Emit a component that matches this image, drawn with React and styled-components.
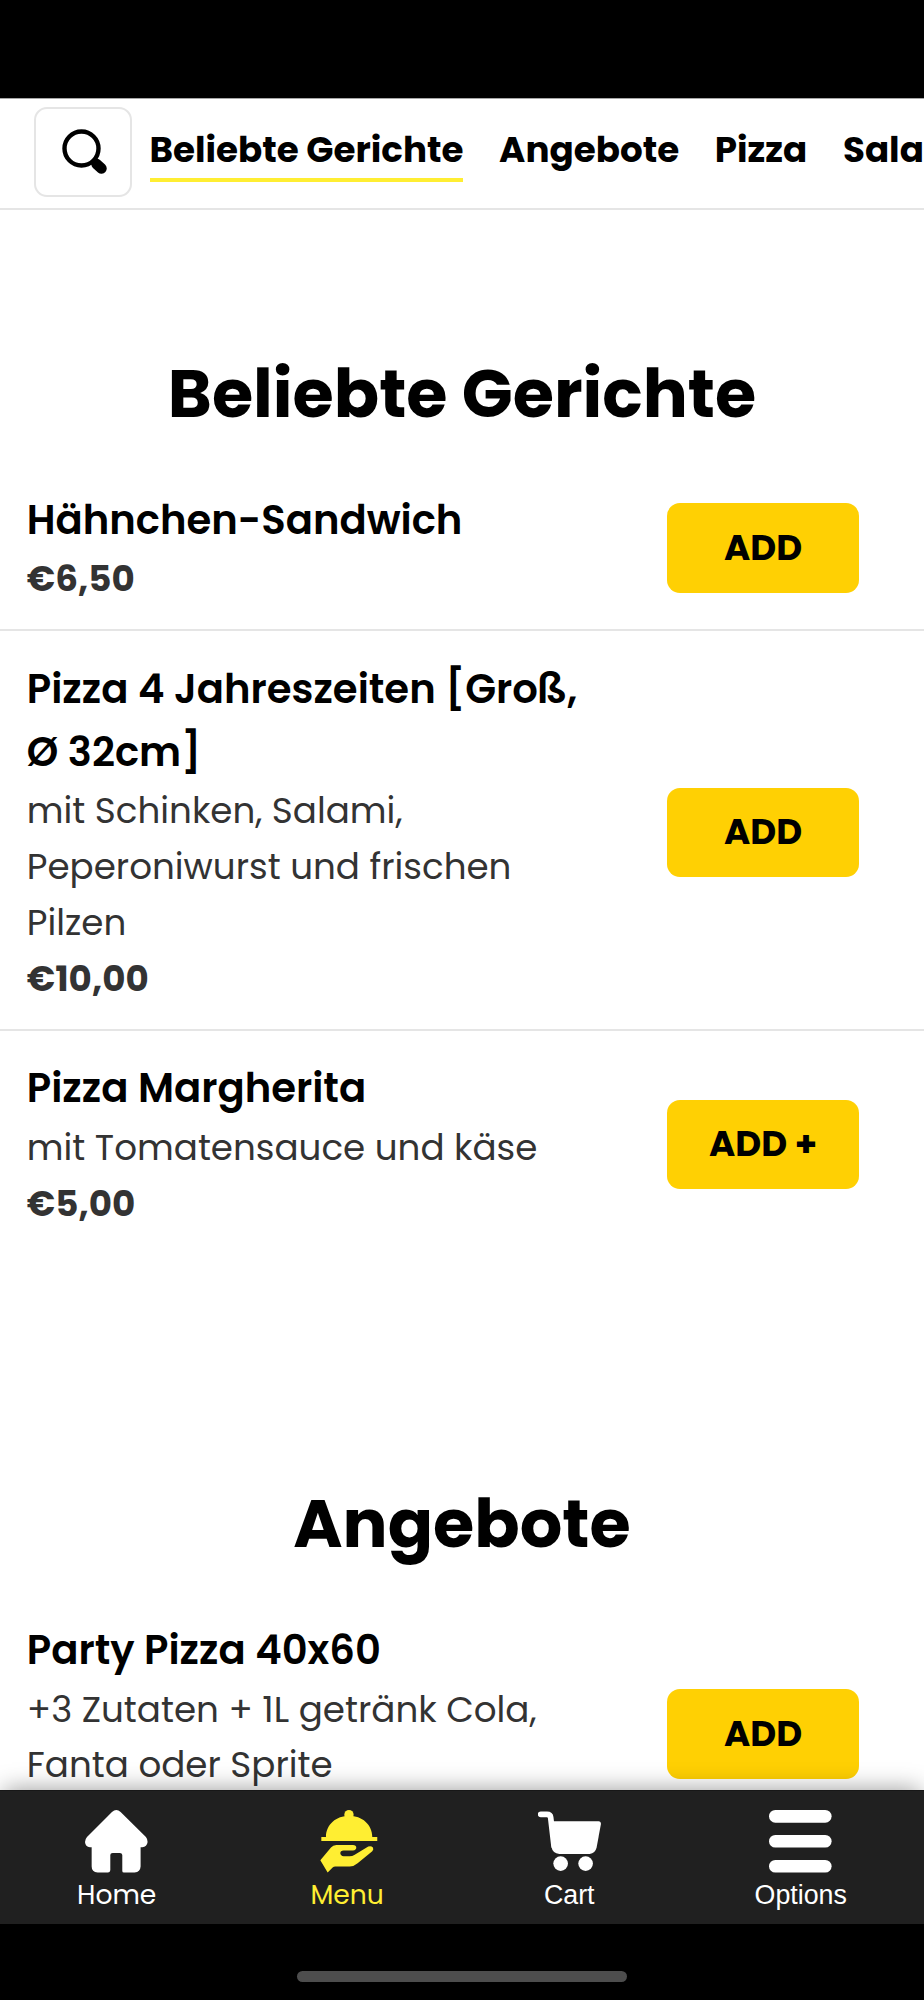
import React from "react";
import styled, { createGlobalStyle } from "styled-components";

const GlobalStyle = createGlobalStyle`
  *, *::before, *::after { box-sizing: border-box; }
  body { margin: 0; background: #000; }
  h2, h3, p { margin: 0; }
`;

const Screen = styled.div`
  display: flex;
  flex-direction: column;
  width: 924px;
  height: 2000px;
  overflow: hidden;
  background: #fff;
  color: #000;
  font-family: Poppins, Inter, sans-serif;
`;

const StatusBar = styled.div`
  flex: none;
  height: 98px;
  background: #000;
`;

const CategoryBar = styled.header`
  flex: none;
  display: flex;
  align-items: flex-start;
  gap: 18px;
  height: 112px;
  padding: 8px 0 0 33.5px;
  overflow: hidden;
  border-top: 1px solid #a6a6a6;
  border-bottom: 2.5px solid #e5e5e5;
`;

const SearchButton = styled.button`
  flex: none;
  display: flex;
  align-items: center;
  justify-content: center;
  width: 98px;
  height: 90px;
  padding: 0 0 0 5px;
  border: 2px solid #e5e5e5;
  border-radius: 13px;
  background: #fff;
`;

const CategoryList = styled.nav`
  display: flex;
  gap: 35.7px;
  padding-top: 16px;
`;

const Category = styled.a`
  flex: none;
  padding-bottom: 1px;
  border-bottom: 4px solid ${(p) => (p.$active ? "#ffee32" : "transparent")};
  font-size: 35.7px;
  font-weight: 700;
  line-height: 54px;
  white-space: nowrap;
`;

const MenuContent = styled.main`
  flex: 1;
  min-height: 0;
  overflow: hidden;
`;

const Section = styled.section`
  padding: 133.6px 0 86.7px;
`;

const SectionTitle = styled.h2`
  margin-bottom: 18.1px;
  font-size: 66.9px;
  font-weight: 700;
  line-height: 100.5px;
  text-align: center;
`;

const DishRow = styled.article`
  display: flex;
  align-items: center;
  justify-content: space-between;
  padding: 26.5px 65px 22px 26.8px;

  & + & {
    border-top: 2.2px solid #e5e5e5;
  }
`;

const DishInfo = styled.div`
  width: 570px;
`;

const DishName = styled.h3`
  font-size: 40.15px;
  font-weight: 600;
  line-height: 62.8px;
`;

const DishText = styled.p`
  color: #333;
  font-size: 35.7px;
  line-height: 55.8px;
`;

const Price = styled(DishText)`
  min-height: 55.8px;
  font-weight: 700;
`;

const AddButton = styled.button`
  flex: none;
  width: 192px;
  height: 89.3px;
  margin-top: 0.2px;
  padding: 0;
  border: 0;
  border-radius: 13px;
  background: #ffd003;
  color: #000;
  font: 700 35.7px/88.5px Poppins, Inter, sans-serif;
`;

const TabBar = styled.nav`
  flex: none;
  position: relative;
  display: flex;
  justify-content: space-around;
  height: 134px;
  padding-top: 19px;
  border-top: 1px solid #171717;
  background: #202020;
  box-shadow: 0 -5px 22px -4px rgba(0, 0, 0, 0.38);
`;

const Tab = styled.a`
  display: flex;
  flex-direction: column;
  align-items: center;
  color: ${(p) => (p.$active ? "#ffee32" : "#fff")};
  font-family: ${(p) => (p.$system ? '"Liberation Sans", Arial' : "Poppins, Inter")}, sans-serif;
  font-size: ${(p) => (p.$system ? "26.8px" : "26.6px")};
  line-height: ${(p) => (p.$system ? "44px" : "43px")};
`;

const TabIcon = styled.svg`
  width: 62.6px;
  height: 62.6px;
  fill: currentColor;
`;

const HomeArea = styled.footer`
  flex: none;
  display: flex;
  justify-content: center;
  height: 76px;
  padding-top: 47px;
  background: #000;
`;

const HomeIndicator = styled.div`
  width: 330px;
  height: 11px;
  border-radius: 6px;
  background: #4d4d4d;
`;

const SearchIcon = () => (
  <svg width="46" height="46" viewBox="0 0 46 46" fill="none" stroke="#000">
    <circle cx="19.5" cy="19.5" r="17" strokeWidth="4.4" />
    <path d="M30 31L34 35" strokeWidth="7" />
    <path d="M34.500 35L39.500 39.500" strokeWidth="10.500" strokeLinecap="round" />
  </svg>
);

const icons = {
  home: (
    <path d="M81 6Q94-6 107 6L183 81Q188 87 188 96Q186 111 172 112H167V170Q166 187 149 188H117Q112 188 112 183V135Q111 129 105 129H83Q76 129 76 135V181Q75 188 69 188H38Q20 187 20 170V112H15Q1 110 0 96Q0 88 6 81Z" />
  ),
  menu: (
    <>
      <circle cx="99" cy="14" r="14" />
      <path d="M30 81C30 43 61 17 99.500 17S169 43 169 81H184V93H16V81Z" />
      <path d="M13 151L45 113Q51 105 61 105H111Q121 106 121 113Q121 121 111 122H83Q73 123 73 130Q74 138 83 139H101Q109 139 115 135L157 110Q165 106 171 113Q174 119 169 124L125 160Q115 169 101 170H58Q53 170 50 173L35 188Z" />
    </>
  ),
  cart: (
    <>
      <path d="M8 13H27Q37 13 38 22L48 108" fill="none" stroke="currentColor" strokeWidth="17" strokeLinecap="round" />
      <path d="M40 34H182Q189 34 189 42L176 113Q172 130 155 132H64Q44 131 41 113Z" />
      <circle cx="68" cy="161" r="22" />
      <circle cx="143" cy="161" r="22" />
    </>
  ),
  options: (
    <>
      <rect width="188" height="38" rx="19" />
      <rect y="75" width="188" height="38" rx="19" />
      <rect y="150" width="188" height="38" rx="19" />
    </>
  ),
};

const categories = ["Beliebte Gerichte", "Angebote", "Pizza", "Sala"];

const sections = [
  {
    title: "Beliebte Gerichte",
    dishes: [
      { name: "Hähnchen-Sandwich", price: "€6,50" },
      {
        name: "Pizza 4 Jahreszeiten [Groß, Ø 32cm]",
        text: "mit Schinken, Salami, Peperoniwurst und frischen Pilzen",
        price: "€10,00",
      },
      {
        name: "Pizza Margherita",
        text: "mit Tomatensauce und käse",
        price: "€5,00",
        action: "ADD +",
      },
    ],
  },
  {
    title: "Angebote",
    dishes: [
      { name: "Party Pizza 40x60", text: "+3 Zutaten + 1L getränk Cola, Fanta oder Sprite" },
    ],
  },
];

const tabs = [
  { label: "Home", icon: "home" },
  { label: "Menu", icon: "menu", active: true },
  { label: "Cart", icon: "cart", system: true },
  { label: "Options", icon: "options", system: true },
];

const Dish = ({ name, text, price, action = "ADD" }) => (
  <DishRow>
    <DishInfo>
      <DishName>{name}</DishName>
      {text && <DishText>{text}</DishText>}
      <Price>{price}</Price>
    </DishInfo>
    <AddButton>{action}</AddButton>
  </DishRow>
);

export default function App() {
  return (
    <>
      <GlobalStyle />
      <Screen>
        <StatusBar />
        <CategoryBar>
          <SearchButton aria-label="Suche">
            <SearchIcon />
          </SearchButton>
          <CategoryList>
            {categories.map((name, i) => (
              <Category key={name} $active={i === 0}>
                {name}
              </Category>
            ))}
          </CategoryList>
        </CategoryBar>
        <MenuContent>
          {sections.map((section) => (
            <Section key={section.title}>
              <SectionTitle>{section.title}</SectionTitle>
              {section.dishes.map((dish) => (
                <Dish key={dish.name} {...dish} />
              ))}
            </Section>
          ))}
        </MenuContent>
        <TabBar>
          {tabs.map((tab) => (
            <Tab key={tab.label} $active={tab.active} $system={tab.system}>
              <TabIcon viewBox="0 0 188 188">{icons[tab.icon]}</TabIcon>
              {tab.label}
            </Tab>
          ))}
        </TabBar>
        <HomeArea>
          <HomeIndicator />
        </HomeArea>
      </Screen>
    </>
  );
}
